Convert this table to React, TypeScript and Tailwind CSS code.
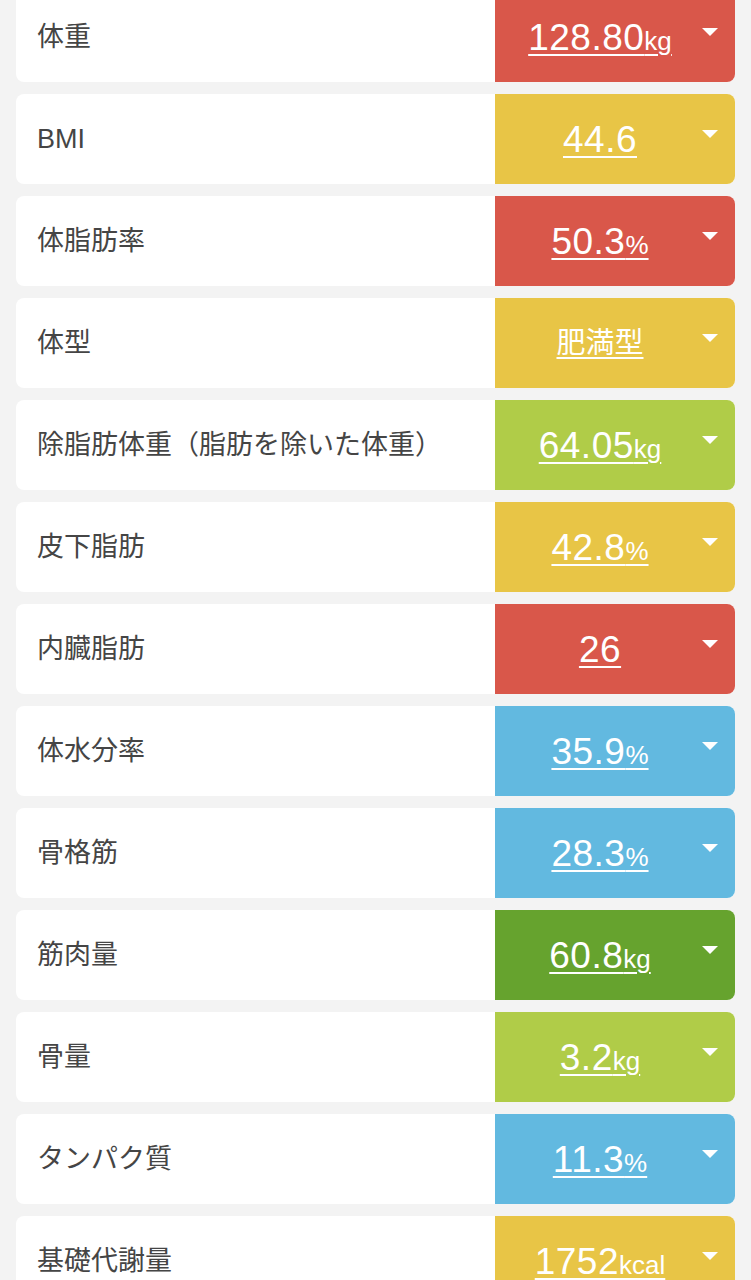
type Row = {
  label: string;
  value: string;
  unit?: string;
  color: string;
  cjk?: boolean;
};

const rows: Row[] = [
  { label: "体重", value: "128.80", unit: "kg", color: "bg-[#d9574a]" },
  { label: "BMI", value: "44.6", color: "bg-[#e8c546]" },
  { label: "体脂肪率", value: "50.3", unit: "%", color: "bg-[#d9574a]" },
  { label: "体型", value: "肥満型", color: "bg-[#e8c546]", cjk: true },
  { label: "除脂肪体重（脂肪を除いた体重）", value: "64.05", unit: "kg", color: "bg-[#b0cc48]" },
  { label: "皮下脂肪", value: "42.8", unit: "%", color: "bg-[#e8c546]" },
  { label: "内臓脂肪", value: "26", color: "bg-[#d9574a]" },
  { label: "体水分率", value: "35.9", unit: "%", color: "bg-[#62b9e0]" },
  { label: "骨格筋", value: "28.3", unit: "%", color: "bg-[#62b9e0]" },
  { label: "筋肉量", value: "60.8", unit: "kg", color: "bg-[#66a32e]" },
  { label: "骨量", value: "3.2", unit: "kg", color: "bg-[#b0cc48]" },
  { label: "タンパク質", value: "11.3", unit: "%", color: "bg-[#62b9e0]" },
  { label: "基礎代謝量", value: "1752", unit: "kcal", color: "bg-[#e8c546]" },
];

function Caret() {
  return (
    <svg
      className="absolute right-[17px] top-[36px] h-[8px] w-[16px] fill-white"
      viewBox="0 0 16 8"
    >
      <path d="M0 0h16L8 8z" />
    </svg>
  );
}

function StatRow({ row }: { row: Row }) {
  return (
    <div className="flex h-[90px] flex-none overflow-hidden rounded-lg bg-white">
      <div className="flex flex-1 items-center pl-[21px] text-[27px] text-[#454545]">
        {row.label}
      </div>
      <div className={`relative flex w-[240px] flex-none items-center ${row.color}`}>
        <div className="flex w-[210px] justify-center pt-[1px] text-white">
          <span className="underline decoration-2 underline-offset-[4px]">
            {row.cjk ? (
              <span className="text-[29px]">{row.value}</span>
            ) : (
              <span className="text-[37px] leading-none tracking-[0.5px]">{row.value}</span>
            )}
            {row.unit && <span className="text-[26px] leading-none">{row.unit}</span>}
          </span>
        </div>
        <Caret />
      </div>
    </div>
  );
}

export default function App() {
  return (
    <div className="h-[1280px] overflow-hidden bg-[#f3f3f3] font-['Liberation_Sans','Noto_Sans_CJK_JP',sans-serif]">
      <div className="-mt-[8px] flex flex-col gap-[12px] px-[16px]">
        {rows.map((row) => (
          <StatRow key={row.label} row={row} />
        ))}
      </div>
    </div>
  );
}
